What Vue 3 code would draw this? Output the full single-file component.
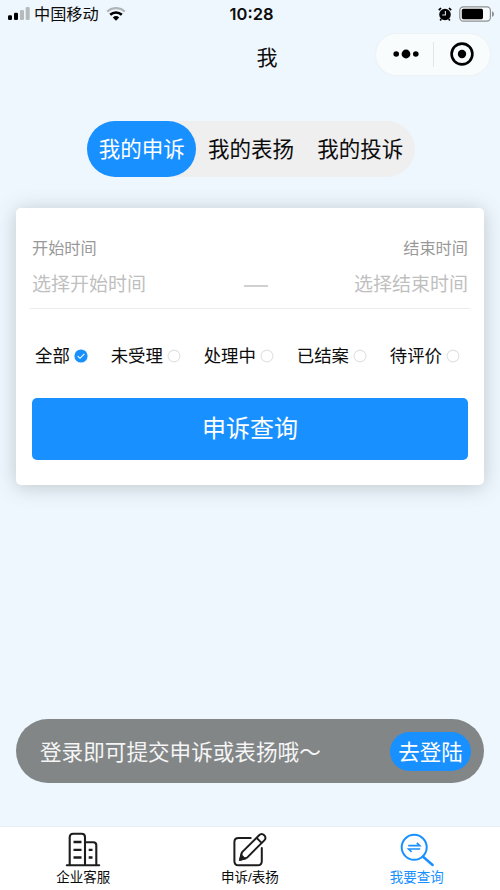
<script setup>
import { ref } from 'vue'

const tabs = ['我的申诉', '我的表扬', '我的投诉']
const activeTab = ref(0)
const states = ['全部', '未受理', '处理中', '已结案', '待评价']
const activeState = ref(0)
</script>

<template>
  <div class="page">
    <header class="status">
      <div class="carrier">
        <svg class="signal" width="22" height="14" viewBox="0 0 22 14">
          <rect x="0" y="8.2" width="4" height="4.8" rx="1.2" fill="#000" />
          <rect x="6" y="5.7" width="4" height="7.3" rx="1.2" fill="#000" />
          <rect x="12" y="3" width="4" height="10" rx="1.2" fill="#b5babd" />
          <rect x="17.7" y="0" width="4" height="13" rx="1.2" fill="#b5babd" />
        </svg>
        <span class="carrier-name">中国移动</span>
        <svg class="wifi" width="20" height="14" viewBox="0 0 20 14">
          <path d="M1.3 4.6A12.6 12.6 0 0 1 18.7 4.6" fill="none" stroke="#b0b5b8" stroke-width="2.3" />
          <path d="M4.2 7.8A8.4 8.4 0 0 1 15.8 7.8" fill="none" stroke="#000" stroke-width="2.6" />
          <path d="M6.8 10.5A4.7 4.7 0 0 1 13.2 10.5L10 13.8Z" fill="#000" />
        </svg>
      </div>
      <span class="clock">10:28</span>
      <div class="power">
        <svg width="14" height="14" viewBox="0 0 14 14">
          <circle cx="7" cy="7.5" r="5.8" fill="#000" />
          <path d="M.8 3.2L3 1M13.2 3.2L11 1M3.2 12L2.2 13.4M10.8 12L11.8 13.4" stroke="#000" stroke-width="1.7" />
          <path d="M7.4 4v4H4.2" fill="none" stroke="#dce2e6" stroke-width="1.1" />
        </svg>
        <svg width="36" height="16" viewBox="0 0 36 16">
          <rect x=".8" y=".8" width="30.6" height="14.4" rx="3.6" fill="#f8fbfd" stroke="#8c9092" stroke-width="1.2" />
          <rect x="2.8" y="2.8" width="21.2" height="10.4" rx="1.6" fill="#000" />
          <path d="M33 5.2C35.6 6 35.6 10 33 10.8Z" fill="#8c9092" />
        </svg>
      </div>
    </header>

    <div class="navbar">
      <h1 class="title">我</h1>
      <div class="capsule">
        <svg class="dots" width="26" height="10" viewBox="0 0 26 10">
          <circle cx="3.2" cy="5" r="2.8" /><circle cx="13" cy="5" r="4.4" /><circle cx="22.8" cy="5" r="2.8" />
        </svg>
        <i class="split"></i>
        <svg class="target" width="24" height="24" viewBox="0 0 24 24">
          <circle cx="12" cy="12" r="10.4" fill="none" stroke="#000" stroke-width="2.6" />
          <circle cx="12" cy="12" r="4.2" />
        </svg>
      </div>
    </div>

    <nav class="tabs">
      <button v-for="(t, i) in tabs" :key="t" class="tab" :class="{ active: i === activeTab }" @click="activeTab = i">{{ t }}</button>
    </nav>

    <section class="card">
      <div class="range">
        <div class="field">
          <label>开始时间</label>
          <span>选择开始时间</span>
        </div>
        <i class="dash"></i>
        <div class="field end">
          <label>结束时间</label>
          <span>选择结束时间</span>
        </div>
      </div>
      <div class="states">
        <div v-for="(s, i) in states" :key="s" class="state" @click="activeState = i">
          <span>{{ s }}</span>
          <svg width="14" height="14" viewBox="0 0 14 14">
            <template v-if="i === activeState">
              <circle cx="7" cy="7" r="6.6" fill="#1890ff" />
              <path d="M3.7 7.1L6 9.3L10.4 4.9" fill="none" stroke="#fff" stroke-width="1.1" />
            </template>
            <circle v-else cx="7" cy="7" r="5.9" fill="#fff" stroke="#e2e2e2" stroke-width="1.1" />
          </svg>
        </div>
      </div>
      <button class="query">申诉查询</button>
    </section>

    <div class="login">
      <span>登录即可提交申诉或表扬哦～</span>
      <button>去登陆</button>
    </div>

    <footer class="tabbar">
      <div class="item">
        <svg width="36" height="36" viewBox="0 0 36 36" fill="none" stroke="#1c1c1c" stroke-width="2.1">
          <path d="M1.8 34.3H34.2" stroke-linecap="round" />
          <path d="M4.7 34V6.2Q4.7 2.8 8.1 2.8H16.5Q20 2.8 20 6.2V34" />
          <path d="M20 11.2H28.2Q31.3 11.2 31.3 14.3V34" />
          <path d="M8.5 11H16.5M8.5 18.8H16.5M8.5 26.5H16.5M23.7 18.8H27.5M23.7 26.5H27.5" stroke-width="2.3" />
        </svg>
        <span>企业客服</span>
      </div>
      <div class="item">
        <svg width="36" height="36" viewBox="0 0 36 36" fill="none" stroke="#1c1c1c" stroke-width="2">
          <path d="M18.7 6.9H6.5Q2.4 6.9 2.4 11V30.2Q2.4 34.3 6.5 34.3H25.7Q29.8 34.3 29.8 30.2V17.1" stroke-linecap="round" />
          <path d="M8.2 28.7L9.9 21.4L27.1 4.2C30.4 .9 35.8 5.9 32.3 9.4L15.1 26.6Z" stroke-linejoin="round" />
          <path d="M24.6 6.9L29.8 12.1" />
          <path d="M8.2 28.7L9.2 24.2L12.6 27.6Z" fill="#1c1c1c" />
        </svg>
        <span>申诉/表扬</span>
      </div>
      <div class="item current">
        <svg width="36" height="36" viewBox="0 0 36 36" fill="none" stroke="#1890ff" stroke-width="2">
          <circle cx="15.2" cy="16.3" r="12.5" />
          <path d="M23.8 25.5L33.6 34" stroke-width="2.5" stroke-linecap="round" />
          <path d="M9.2 14.6H20.8L17.8 11.8M21.2 18H9.6L12.6 20.8" stroke-width="1.6" />
        </svg>
        <span>我要查询</span>
      </div>
    </footer>
  </div>
</template>

<style>
body {
  margin: 0;
}
</style>

<style scoped>
* {
  box-sizing: border-box;
}
.page {
  width: 500px;
  height: 890px;
  display: flex;
  flex-direction: column;
  overflow: hidden;
  background: #eff7fe;
  color: #0c0c0c;
  font-family: "Liberation Sans", "Noto Sans CJK SC", sans-serif;
  white-space: nowrap;
}
button {
  border: 0;
  padding: 0;
  font-family: inherit;
  font-weight: 400;
}
svg {
  display: block;
  flex: none;
}
.status {
  height: 28px;
  display: grid;
  grid-template-columns: 1fr auto 1fr;
  align-items: center;
  padding: 0 5px 0 8px;
}
.carrier,
.power {
  display: flex;
  align-items: center;
}
.carrier-name {
  margin: 0 7px 0 4px;
  font-size: 16.2px;
  line-height: 28px;
}
.clock {
  font: 600 16.5px/28px Inter, sans-serif;
}
.power {
  justify-content: flex-end;
  gap: 7px;
}
.navbar {
  height: 60px;
  display: grid;
  grid-template-columns: 1fr auto 1fr;
  align-items: center;
  padding: 0 9px 8px 43px;
}
.title {
  grid-column: 2;
  margin: 7px 0 0;
  font-size: 21px;
  line-height: 30px;
  font-weight: 400;
}
.capsule {
  justify-self: end;
  width: 116px;
  height: 43px;
  display: flex;
  align-items: center;
  border: 1px solid #edf2f4;
  border-radius: 22px;
  background: #f9fcfd;
}
.dots {
  margin: 0 14px 0 17px;
}
.split {
  width: 1px;
  height: 25px;
  margin-right: 16px;
  background: #e2e6e8;
}
.tabs {
  width: 328px;
  height: 56px;
  margin: 33px 0 0 87px;
  display: flex;
  flex: none;
  border-radius: 28px;
  background: #efefef;
}
.tab {
  flex: 1;
  padding-top: 3px;
  border-radius: 28px;
  background: transparent;
  color: #0c0c0c;
  font-size: 21.5px;
  line-height: 53px;
}
.tab.active {
  background: #1890ff;
  color: #fff;
}
.card {
  height: 277px;
  margin: 31px 16px 0;
  padding: 27px 16px 0;
  flex: none;
  border-radius: 5px;
  background: #fff;
  box-shadow: 0 2px 20px rgba(70, 90, 80, .3);
}
.range {
  height: 74px;
  margin: 0 -2px;
  padding: 0 2px;
  display: flex;
  justify-content: space-between;
  border-bottom: 1px solid #ececec;
}
.field {
  display: flex;
  flex-direction: column;
}
.field label {
  color: #999;
  font-size: 16.2px;
  line-height: 26px;
}
.field span {
  margin-top: 9px;
  color: #bfbfbf;
  font-size: 19px;
  line-height: 30px;
}
.end {
  text-align: right;
}
.dash {
  width: 24px;
  height: 2px;
  margin: 50px 0 0 12px;
  background: #d0d0d0;
}
.states {
  height: 89px;
  padding: 0 8px 0 3px;
  display: flex;
  justify-content: space-between;
  align-items: center;
}
.state {
  display: flex;
  align-items: center;
  gap: 4px;
  margin-top: 5px;
  font-size: 17.4px;
  line-height: 26px;
}
.query {
  display: block;
  width: 436px;
  height: 62px;
  border-radius: 5px;
  background: #1890ff;
  color: #fff;
  font-size: 24px;
  line-height: 60px;
}
.login {
  height: 64px;
  margin: auto 16px 43px;
  padding: 0 13px 0 24px;
  display: flex;
  flex: none;
  align-items: center;
  justify-content: space-between;
  border-radius: 32px;
  background: #828687;
  color: #f5f5f5;
  font-size: 21.6px;
}
.login span {
  margin-top: -2px;
}
.login button {
  width: 81px;
  height: 39px;
  padding-top: 3px;
  border-radius: 20px;
  background: #1890ff;
  color: #fff;
  font-size: 21.5px;
  line-height: 36px;
}
.tabbar {
  height: 64px;
  flex: none;
  display: grid;
  grid-template-columns: repeat(3, 1fr);
  border-top: 1px solid #e8eef2;
  background: #fff;
}
.item {
  display: flex;
  flex-direction: column;
  align-items: center;
  padding-top: 4px;
  font-size: 13.5px;
  line-height: 22px;
}
.current {
  color: #1890ff;
}
</style>
